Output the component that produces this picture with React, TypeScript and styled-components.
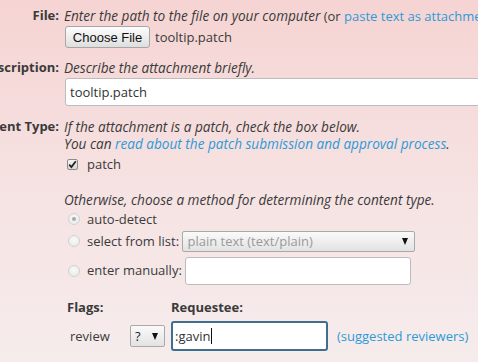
import React from "react";
import styled, { createGlobalStyle } from "styled-components";

const Global = createGlobalStyle`
  html, body {
    margin: 0;
    padding: 0;
    width: 478px;
    height: 362px;
    overflow: hidden;
    background: linear-gradient(180deg, #f5d4d3 0%, #f6e3e3 55%, #f6ecec 100%);
  }
  body {
    font-family: "Open Sans", "DejaVu Sans", sans-serif;
    font-size: 13px;
    line-height: 17px;
    color: #3a3a3a;
  }
`;

const Page = styled.div`
  width: 478px;
  height: 362px;
  padding-top: 7px;
  box-sizing: border-box;
  overflow: hidden;
`;

const Row = styled.div<{ $mb: number }>`
  display: grid;
  grid-template-columns: 59px 1fr;
  column-gap: 5px;
  margin-bottom: ${(p) => p.$mb}px;
`;

const Label = styled.div`
  display: flex;
  justify-content: flex-end;
  white-space: nowrap;
  font-weight: 700;
  color: #3a3a3a;
  height: 17px;
`;

const Value = styled.div`
  min-width: 0;
  white-space: nowrap;
`;

const Line = styled.div`
  height: 17px;
  white-space: nowrap;
`;

const Em = styled.span`
  font-style: italic;
  font-size: 13.6px;
`;

const Link = styled.a<{ $italic?: boolean }>`
  color: #2d9ad8;
  text-decoration: none;
  font-style: ${(p) => (p.$italic ? "italic" : "normal")};
`;

const FileLine = styled.div`
  display: flex;
  align-items: center;
  margin-top: 2px;
  gap: 5px;
`;

const Button = styled.button`
  width: 85px;
  height: 22px;
  margin-left: 1px;
  padding: 0;
  border: 1px solid #a6a6a6;
  border-radius: 3px;
  background: linear-gradient(180deg, #fdfdfd 0%, #ececec 55%, #dedede 100%);
  font-family: "Liberation Sans", Arial, sans-serif;
  font-size: 13px;
  color: #111;
`;

const TextInput = styled.div<{ $w: number; $h: number; $focus?: boolean }>`
  box-sizing: border-box;
  width: ${(p) => p.$w}px;
  height: ${(p) => p.$h}px;
  background: #fff;
  border: ${(p) => (p.$focus ? "2px solid #3f6f8f" : "1px solid #bcbcbc")};
  border-radius: 3px;
  display: flex;
  align-items: center;
  padding-left: ${(p) => (p.$focus ? 2 : 3)}px;
  white-space: nowrap;
  color: #333;
`;

const DescInput = styled(TextInput)`
  margin-top: 2px;
  margin-left: 1px;
  padding-left: 4px;
`;

const Caret = styled.span`
  display: inline-block;
  width: 1px;
  height: 16px;
  background: #111;
  margin-left: 1px;
`;

const OptionRow = styled.div<{ $h: number; $mt?: number }>`
  display: flex;
  align-items: center;
  height: ${(p) => p.$h}px;
  margin-top: ${(p) => p.$mt ?? 0}px;
  white-space: nowrap;
`;

const Check = styled.span`
  box-sizing: border-box;
  width: 11px;
  height: 11px;
  margin: 0 9px 0 3px;
  border: 1px solid #8d8d8d;
  border-radius: 2px;
  background: linear-gradient(180deg, #f4f4f4, #d6d6d6);
  display: flex;
  align-items: center;
  justify-content: center;
`;

const Radio = styled.span<{ $on?: boolean }>`
  box-sizing: border-box;
  width: 12px;
  height: 12px;
  margin: 0 7px 0 4px;
  border-radius: 50%;
  border: 1px solid #d2d2d2;
  background: radial-gradient(circle at 50% 40%, #fafafa, #e6e6e6);
  display: flex;
  align-items: center;
  justify-content: center;
  &::after {
    content: "";
    display: ${(p) => (p.$on ? "block" : "none")};
    width: 4px;
    height: 4px;
    border-radius: 50%;
    background: #a9a9a9;
  }
`;

const Select = styled.div<{ $w: number; $h: number; $muted?: boolean }>`
  box-sizing: border-box;
  width: ${(p) => p.$w}px;
  height: ${(p) => p.$h}px;
  border: 1px solid #a9a9a9;
  border-radius: 2px;
  background: linear-gradient(180deg, #fafafa 0%, #ececec 60%, #e2e2e2 100%);
  display: flex;
  align-items: center;
  justify-content: space-between;
  padding: 0 6px 0 4px;
  color: ${(p) => (p.$muted ? "#9a9a9a" : "#222")};
  white-space: nowrap;
`;

const Arrow = styled.span`
  width: 0;
  height: 0;
  border-left: 3.5px solid transparent;
  border-right: 3.5px solid transparent;
  border-top: 7px solid #111;
`;

const Blank = styled.div`
  height: 18px;
`;

const Flags = styled.div`
  display: grid;
  grid-template-columns: 63px 41px 166px auto;
  grid-template-rows: 18px 30px;
  row-gap: 5px;
  margin-left: 67px;
  margin-top: 12px;
  align-items: center;
`;

const Head = styled.div<{ $span?: number }>`
  font-weight: 700;
  grid-column: span ${(p) => p.$span ?? 1};
  white-space: nowrap;
`;

const Cell = styled.div<{ $pl?: number }>`
  padding-left: ${(p) => p.$pl ?? 0}px;
  white-space: nowrap;
  display: flex;
  align-items: center;
`;

export default function App() {
  return (
    <Page>
      <Global />
      <Row $mb={11}>
        <Label>File:</Label>
        <Value>
          <Line>
            <Em>Enter the path to the file on your computer</Em> (or{" "}
            <Link>paste text as attachment</Link>)
          </Line>
          <FileLine>
            <Button>Choose File</Button>
            <span>tooltip.patch</span>
          </FileLine>
        </Value>
      </Row>
      <Row $mb={12}>
        <Label>Description:</Label>
        <Value>
          <Line>
            <Em>Describe the attachment briefly.</Em>
          </Line>
          <DescInput $w={460} $h={28}>tooltip.patch</DescInput>
        </Value>
      </Row>
      <Row $mb={0}>
        <Label>Content Type:</Label>
        <Value>
          <Line>
            <Em>If the attachment is a patch, check the box below.</Em>
          </Line>
          <Line>
            <Em>
              You can{" "}
              <Link $italic>read about the patch submission and approval process</Link>.
            </Em>
          </Line>
          <OptionRow $h={18} $mt={3}>
            <Check>
              <svg width="9" height="9" viewBox="0 0 9 9">
                <path d="M1.2 4.6 L3.4 7 L7.8 1.3" fill="none" stroke="#222" strokeWidth="1.8" />
              </svg>
            </Check>
            patch
          </OptionRow>
          <Blank />
          <Line>
            <Em>Otherwise, choose a method for determining the content type.</Em>
          </Line>
          <OptionRow $h={20} $mt={1}>
            <Radio $on />
            auto-detect
          </OptionRow>
          <OptionRow $h={24}>
            <Radio />
            select from list:&nbsp;
            <Select $w={233} $h={21} $muted>
              plain text (text/plain)
              <Arrow />
            </Select>
          </OptionRow>
          <OptionRow $h={31} $mt={2}>
            <Radio />
            enter manually:&nbsp;
            <TextInput $w={226} $h={28} />
          </OptionRow>
        </Value>
      </Row>
      <Flags>
        <Head $span={2}>Flags:</Head>
        <Head $span={2}>Requestee:</Head>
        <Cell $pl={3}>review</Cell>
        <Cell>
          <Select $w={35} $h={22}>
            ?
            <Arrow />
          </Select>
        </Cell>
        <Cell>
          <TextInput $w={157} $h={30} $focus>
            :gavin
            <Caret />
          </TextInput>
        </Cell>
        <Cell>
          <Link>(suggested reviewers)</Link>
        </Cell>
      </Flags>
    </Page>
  );
}
